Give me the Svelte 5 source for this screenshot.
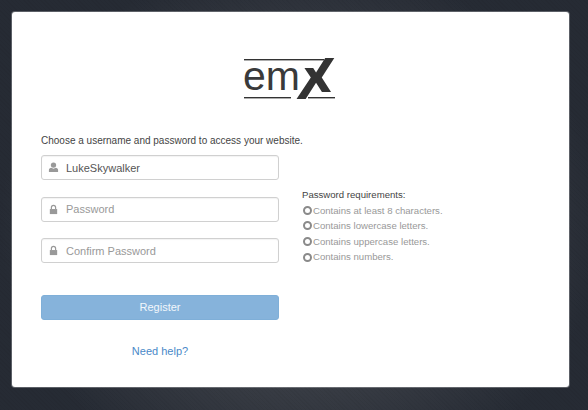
<script>
  const requirements = [
    'Contains at least 8 characters.',
    'Contains lowercase letters.',
    'Contains uppercase letters.',
    'Contains numbers.'
  ];
</script>

<div class="page">
  <main class="card">
    <div class="logo">
      <svg class="mark" width="96" height="46" viewBox="0 0 96 46" aria-label="emX">
        <defs>
          <clipPath id="xclip">
            <polygon points="51,42 68,42 96,0 77,0" />
            <rect x="50" y="10" width="46" height="24" />
          </clipPath>
        </defs>
        <rect x="1" y="1" width="80" height="1.400" fill="#333" />
        <rect x="1" y="39" width="47" height="1.400" fill="#333" />
        <rect x="65" y="39" width="27" height="1.400" fill="#333" />
        <text x="0" y="32" class="em">em</text>
        <g clip-path="url(#xclip)">
          <text x="53" y="41" class="x">X</text>
        </g>
      </svg>
    </div>

    <div class="columns">
      <form class="form">
        <p class="intro">Choose a username and password to access your website.</p>
        <div class="field">
          <svg class="icon" viewBox="0 0 12 12"><circle cx="6" cy="3.400" r="2.900" /><path d="M1 11V8.800C1 7.400 2.200 6.600 3.600 6.400L6 7.400l2.400-1C9.800 6.600 11 7.400 11 8.800V11z" /></svg>
          <span class="value">LukeSkywalker</span>
        </div>
        <div class="field">
          <svg class="icon" viewBox="0 0 12 12"><path d="M2 5.500h8V11H2z" /><path d="M3.700 5.500V3.700a2.300 2.300 0 0 1 4.600 0v1.800" fill="none" stroke="#999" stroke-width="1.300" /></svg>
          <span class="placeholder">Password</span>
        </div>
        <div class="field">
          <svg class="icon" viewBox="0 0 12 12"><path d="M2 5.500h8V11H2z" /><path d="M3.700 5.500V3.700a2.300 2.300 0 0 1 4.600 0v1.800" fill="none" stroke="#999" stroke-width="1.300" /></svg>
          <span class="placeholder">Confirm Password</span>
        </div>
        <button type="button" class="register">Register</button>
        <a class="help" href="#help">Need help?</a>
      </form>

      <aside class="reqs">
        <div class="reqs-title">Password requirements:</div>
        {#each requirements as r}
          <div class="req"><span class="ring"></span>{r}</div>
        {/each}
      </aside>
    </div>
  </main>
</div>

<style>
  :global(body) {
    margin: 0;
    background: #262b34;
  }
  .page {
    box-sizing: border-box;
    width: 588px;
    height: 410px;
    padding: 12px 19px 23px 12px;
    overflow: hidden;
    background:
      repeating-linear-gradient(45deg, rgba(0, 0, 0, 0.04) 0 1px, transparent 1px 3px),
      radial-gradient(ellipse 300px 270px at 300px 225px, #42464d 0%, #383c44 60%, #262b34 100%);
    font-family: "Liberation Sans", Arial, sans-serif;
  }
  .card {
    box-sizing: border-box;
    width: 557px;
    height: 375px;
    background: #fff;
    border-radius: 3px;
    padding: 46px 29px 0;
    box-shadow: 0 0 0 1px rgba(255, 255, 255, 0.25);
  }
  .logo {
    display: flex;
    justify-content: center;
    height: 77px;
    padding-left: 1px;
  }
  .mark {
    overflow: visible;
  }
  .em {
    font: 41px "Liberation Sans", Arial, sans-serif;
    fill: #3a3a3a;
  }
  .x {
    font: bold 60px "Liberation Sans", Arial, sans-serif;
    fill: #333;
  }
  .columns {
    display: flex;
  }
  .form {
    width: 238px;
    display: flex;
    flex-direction: column;
  }
  .intro {
    margin: 0 0 8px;
    font-size: 10px;
    line-height: 12px;
    color: #444;
    white-space: nowrap;
    width: 270px;
  }
  .field {
    box-sizing: border-box;
    height: 25px;
    margin-bottom: 16.500px;
    border: 1px solid #d0d0d0;
    border-radius: 3px;
    display: flex;
    align-items: center;
    padding-left: 6px;
    font-size: 11px;
    box-shadow: inset 0 1px 1px rgba(0, 0, 0, 0.05);
  }
  .icon {
    width: 11px;
    height: 11px;
    fill: #999;
    margin-right: 7px;
  }
  .value {
    color: #555;
  }
  .placeholder {
    color: #999;
  }
  .register {
    box-sizing: border-box;
    height: 25px;
    margin-top: 15px;
    border: 1px solid #7fafd8;
    border-radius: 3px;
    background: #86b3db;
    color: #f2f7fb;
    font: 11px "Liberation Sans", Arial, sans-serif;
  }
  .help {
    margin-top: 24px;
    text-align: center;
    font-size: 11px;
    line-height: 14px;
    color: #4a89c8;
    text-decoration: none;
  }
  .reqs {
    margin: 52px 0 0 23px;
    font-size: 9.600px;
    line-height: 15.600px;
    color: #999;
  }
  .reqs-title {
    color: #444;
  }
  .req {
    display: flex;
    align-items: center;
    white-space: nowrap;
  }
  .ring {
    box-sizing: border-box;
    width: 9px;
    height: 9px;
    margin: 0 1px 0 1px;
    border: 2px solid #8a8a8a;
    border-radius: 50%;
  }
</style>
